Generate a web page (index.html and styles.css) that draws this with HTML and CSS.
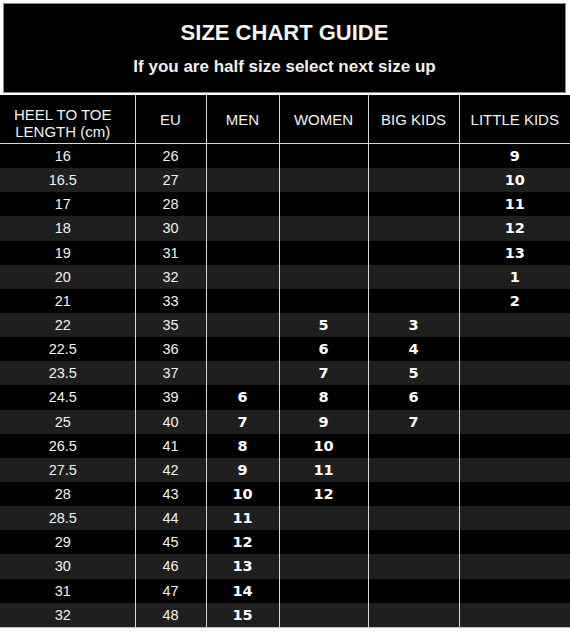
FILE: index.html
```html
<!DOCTYPE html>
<html>
<head>
<meta charset="utf-8">
<link rel="stylesheet" href="styles.css">
</head>
<body>
<div class="page">
  <div class="banner">
    <h1 class="title">SIZE CHART GUIDE</h1>
    <p class="subtitle">If you are half size select next size up</p>
  </div>
  <table class="chart">
    <colgroup>
      <col class="c1"><col class="c2"><col class="c3"><col class="c4"><col class="c5"><col class="c6">
    </colgroup>
    <thead>
      <tr><th class="len">HEEL TO TOE<br>LENGTH (cm)</th><th>EU</th><th>MEN</th><th>WOMEN</th><th>BIG KIDS</th><th>LITTLE KIDS</th></tr>
    </thead>
    <tbody>
      <tr><td>16</td><td>26</td><td class="s"></td><td class="s"></td><td class="s"></td><td class="s">9</td></tr>
      <tr><td>16.5</td><td>27</td><td class="s"></td><td class="s"></td><td class="s"></td><td class="s">10</td></tr>
      <tr><td>17</td><td>28</td><td class="s"></td><td class="s"></td><td class="s"></td><td class="s">11</td></tr>
      <tr><td>18</td><td>30</td><td class="s"></td><td class="s"></td><td class="s"></td><td class="s">12</td></tr>
      <tr><td>19</td><td>31</td><td class="s"></td><td class="s"></td><td class="s"></td><td class="s">13</td></tr>
      <tr><td>20</td><td>32</td><td class="s"></td><td class="s"></td><td class="s"></td><td class="s">1</td></tr>
      <tr><td>21</td><td>33</td><td class="s"></td><td class="s"></td><td class="s"></td><td class="s">2</td></tr>
      <tr><td>22</td><td>35</td><td class="s"></td><td class="s">5</td><td class="s">3</td><td class="s"></td></tr>
      <tr><td>22.5</td><td>36</td><td class="s"></td><td class="s">6</td><td class="s">4</td><td class="s"></td></tr>
      <tr><td>23.5</td><td>37</td><td class="s"></td><td class="s">7</td><td class="s">5</td><td class="s"></td></tr>
      <tr><td>24.5</td><td>39</td><td class="s">6</td><td class="s">8</td><td class="s">6</td><td class="s"></td></tr>
      <tr><td>25</td><td>40</td><td class="s">7</td><td class="s">9</td><td class="s">7</td><td class="s"></td></tr>
      <tr><td>26.5</td><td>41</td><td class="s">8</td><td class="s">10</td><td class="s"></td><td class="s"></td></tr>
      <tr><td>27.5</td><td>42</td><td class="s">9</td><td class="s">11</td><td class="s"></td><td class="s"></td></tr>
      <tr><td>28</td><td>43</td><td class="s">10</td><td class="s">12</td><td class="s"></td><td class="s"></td></tr>
      <tr><td>28.5</td><td>44</td><td class="s">11</td><td class="s"></td><td class="s"></td><td class="s"></td></tr>
      <tr><td>29</td><td>45</td><td class="s">12</td><td class="s"></td><td class="s"></td><td class="s"></td></tr>
      <tr><td>30</td><td>46</td><td class="s">13</td><td class="s"></td><td class="s"></td><td class="s"></td></tr>
      <tr><td>31</td><td>47</td><td class="s">14</td><td class="s"></td><td class="s"></td><td class="s"></td></tr>
      <tr><td>32</td><td>48</td><td class="s">15</td><td class="s"></td><td class="s"></td><td class="s"></td></tr>
    </tbody>
  </table>
</div>
</body>
</html>
```
FILE: styles.css
```css
html, body {
  margin: 0;
  padding: 0;
  background: #ffffff;
}
.page {
  width: 570px;
  height: 632px;
  overflow: hidden;
  font-family: "Liberation Sans", Arial, sans-serif;
  color: #ffffff;
}
.banner {
  box-sizing: border-box;
  margin: 3px 4px 0 3px;
  height: 90px;
  background: #000000;
  border: 1px solid #8a8a8a;
  display: flex;
  flex-direction: column;
  align-items: center;
  padding-top: 16px;
}
.title {
  margin: 0;
  font-size: 22px;
  line-height: 26px;
  font-weight: bold;
  color: #f4f4f4;
}
.subtitle {
  margin: 11px 0 0 0;
  font-size: 17px;
  line-height: 20px;
  font-weight: bold;
  color: #f0f0f0;
}
.chart {
  margin-top: 2px;
  width: 570px;
  table-layout: fixed;
  border-collapse: collapse;
  background: #000000;
}
.c1 { width: 135px; }
.c2 { width: 71px; }
.c3 { width: 73px; }
.c4 { width: 89px; }
.c5 { width: 91px; }
.c6 { width: 111px; }
.chart th {
  height: 48px;
  padding: 0;
  font-weight: normal;
  font-size: 15px;
  line-height: 17px;
  color: #f2f2f2;
  border-bottom: 1px solid #d8d8d8;
  border-left: 1px solid #d8d8d8;
  text-align: center;
  vertical-align: middle;
}
.chart th:first-child,
.chart td:first-child {
  border-left: none;
  padding-right: 9px;
}
.chart th.len {
  height: 40px;
  padding-top: 8px;
}
.chart td {
  height: 24.15px;
  padding: 0;
  text-align: center;
  vertical-align: middle;
  font-size: 14.5px;
  line-height: 16px;
  color: #f2f2f2;
  border-left: 1px solid #d8d8d8;
}
.chart td.s {
  font-family: "DejaVu Sans", Verdana, sans-serif;
  font-weight: bold;
  font-size: 14.5px;
  color: #ffffff;
}
.chart tbody tr:nth-child(even) td {
  background: #1f1f1f;
}
.chart tbody tr:last-child td {
  border-bottom: 1px solid #bdbdbd;
}
```
